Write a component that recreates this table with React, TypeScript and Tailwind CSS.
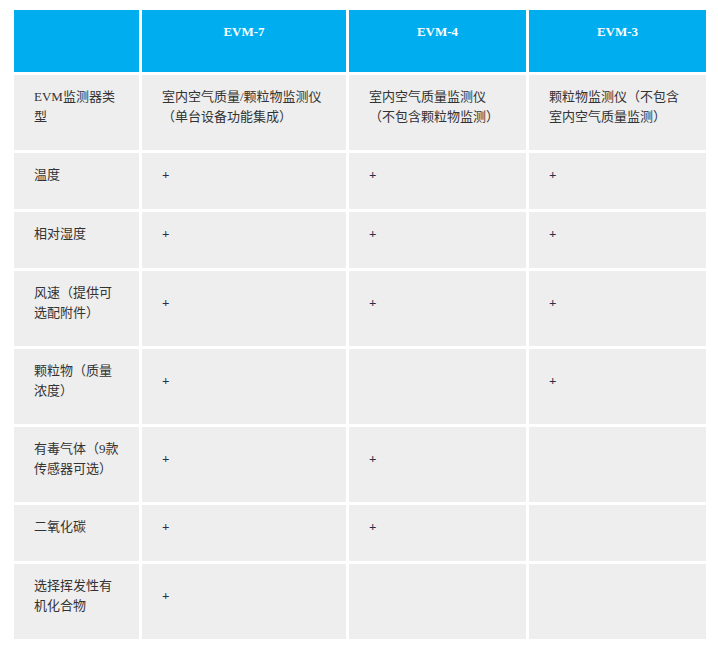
const models = ["EVM-7", "EVM-4", "EVM-3"];

const rows: { label: string[]; cells: (string[] | null)[] }[] = [
	{
		label: ["EVM监测器类", "型"],
		cells: [
			["室内空气质量/颗粒物监测仪", "（单台设备功能集成）"],
			["室内空气质量监测仪", "（不包含颗粒物监测）"],
			["颗粒物监测仪（不包含", "室内空气质量监测）"],
		],
	},
	{ label: ["温度"], cells: [["+"], ["+"], ["+"]] },
	{ label: ["相对湿度"], cells: [["+"], ["+"], ["+"]] },
	{ label: ["风速（提供可", "选配附件）"], cells: [["+"], ["+"], ["+"]] },
	{ label: ["颗粒物（质量", "浓度）"], cells: [["+"], null, ["+"]] },
	{ label: ["有毒气体（9款", "传感器可选）"], cells: [["+"], ["+"], null] },
	{ label: ["二氧化碳"], cells: [["+"], ["+"], null] },
	{ label: ["选择挥发性有", "机化合物"], cells: [["+"], null, null] },
];

function Lines({ lines }: { lines: string[] }) {
	return (
		<div className="whitespace-nowrap">
			{lines.map((line, i) =>
				line === "+" ? (
					<div className="font-bold text-[#2d2d4a]" key={i}>
						+
					</div>
				) : (
					<div key={i}>{line}</div>
				),
			)}
		</div>
	);
}

export default function App() {
	return (
		<div
			className="min-h-[650px] bg-white px-[14px] pt-[10px] text-[13px] leading-[19.5px] text-[#333333]"
			style={{ fontFamily: '"Liberation Serif", "Noto Sans CJK SC", serif' }}
		>
			<div className="grid w-[692px] grid-cols-[125px_204px_177px_177px] grid-rows-[62px_75px_56px_56px_75px_75px_75px_56px_75px] gap-[3px]">
				<div className="bg-[#00aeef]" />
				{models.map((m) => (
					<div
						className="bg-[#00aeef] px-5 pt-3 text-center font-bold text-white"
						key={m}
					>
						{m}
					</div>
				))}

				{rows.map((row, r) => (
					<div className="contents" key={r}>
						<div className="flex items-center bg-[#eeeeee] pt-3 pr-2 pb-6 pl-5">
							<Lines lines={row.label} />
						</div>
						{row.cells.map((cell, c) => (
							<div
								className="flex items-center bg-[#eeeeee] pt-3 pr-3 pb-6 pl-5"
								key={c}
							>
								{cell ? <Lines lines={cell} /> : null}
							</div>
						))}
					</div>
				))}
			</div>
		</div>
	);
}
